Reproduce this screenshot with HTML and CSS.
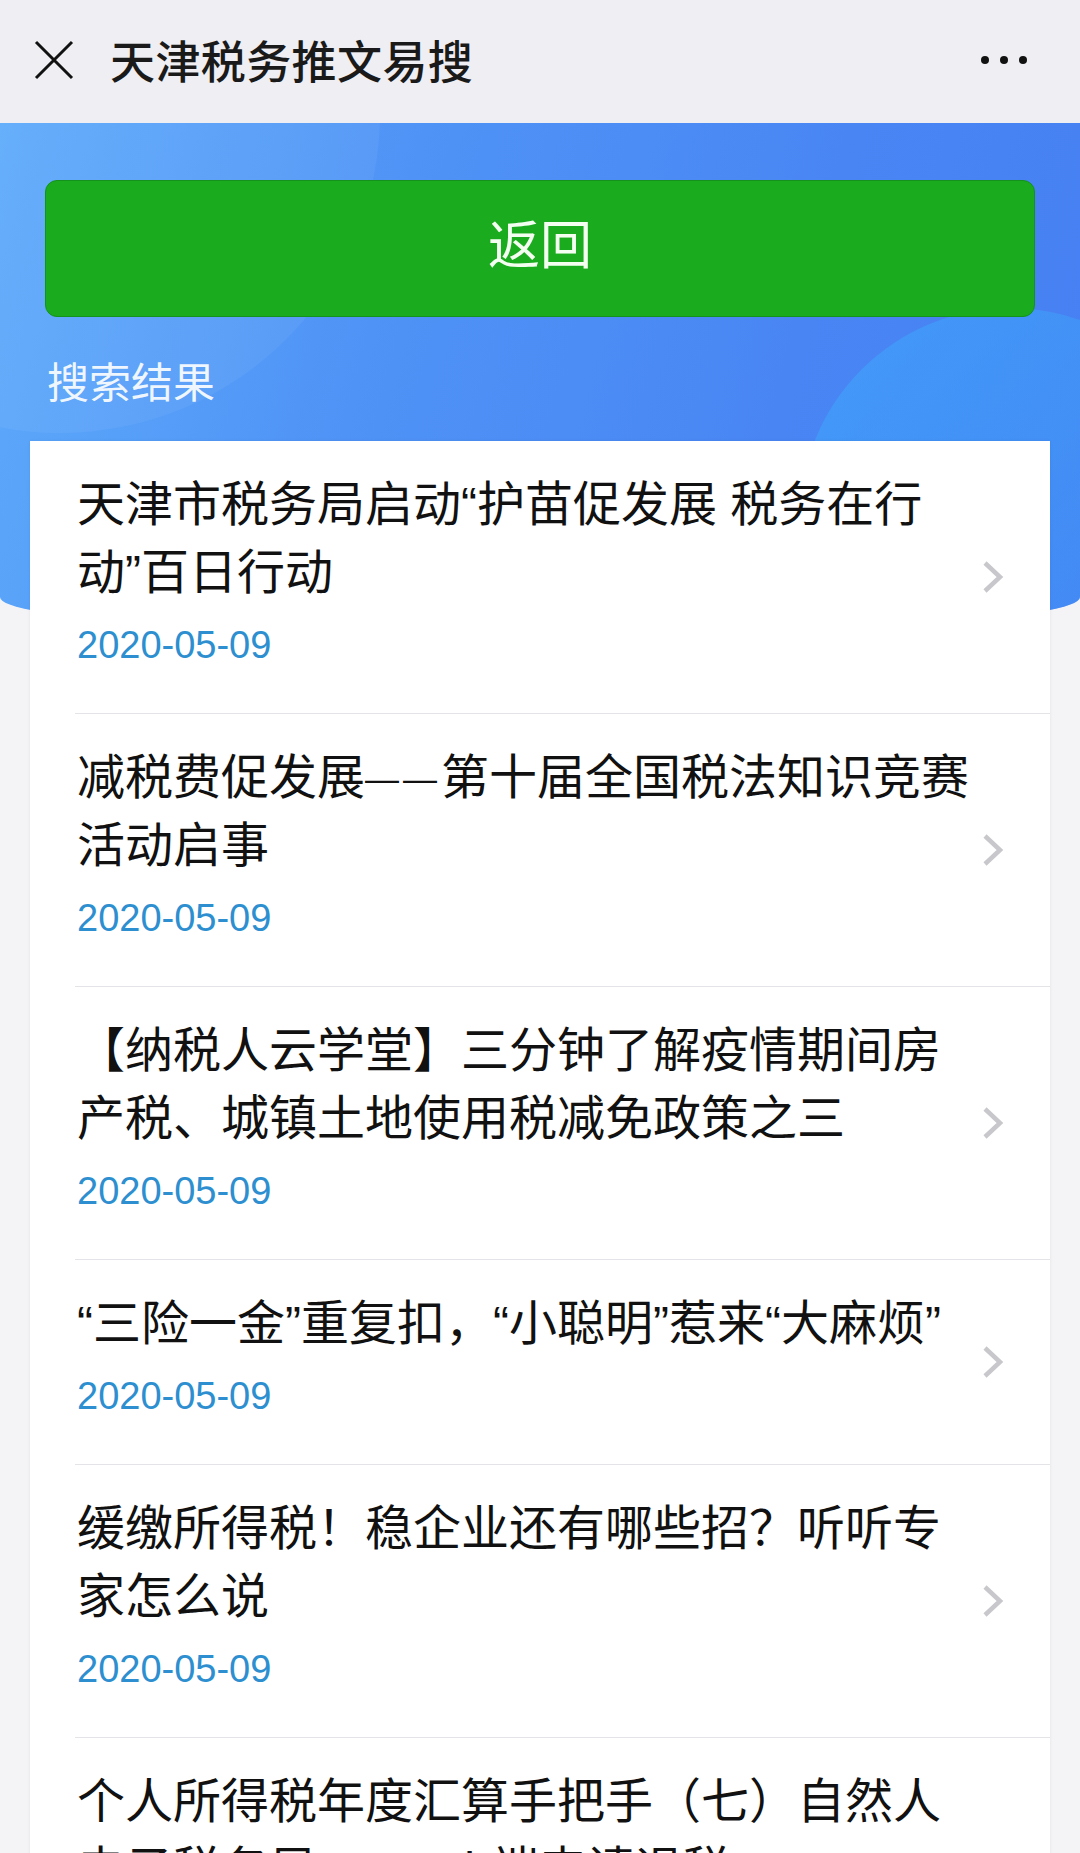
FILE: index.html
```html
<!DOCTYPE html>
<html lang="zh-CN">
<head>
<meta charset="UTF-8" />
<title>天津税务推文易搜</title>
<link rel="stylesheet" href="styles.css">
</head>
<body>
  <!-- Barre du haut -->
  <div class="topbar">
    <svg class="close-icon" viewBox="0 0 40 40" width="40" height="40">
      <path d="M2 2 L38 38 M38 2 L2 38" />
    </svg>
    <div class="topbar-title">天津税务推文易搜</div>
    <div class="more"><span></span><span></span><span></span></div>
  </div>

  <!-- En-tête bleu -->
  <div class="header">
    <button class="back-btn">返回</button>
    <div class="section-label">搜索结果</div>
  </div>

  <!-- Résultats -->
  <div class="results">
    <div class="item">
      <div class="item-body">
        <div class="item-title">天津市税务局启动“护苗促发展 税务在行动”百日行动</div>
        <div class="item-date">2020-05-09</div>
      </div>
      <svg class="chevron" viewBox="0 0 22 34"><polyline points="3,3 18,17 3,31" /></svg>
    </div>
    <div class="item">
      <div class="item-body">
        <div class="item-title">减税费促发展<span class="dash">——</span>第十届全国税法知识竞赛活动启事</div>
        <div class="item-date">2020-05-09</div>
      </div>
      <svg class="chevron" viewBox="0 0 22 34"><polyline points="3,3 18,17 3,31" /></svg>
    </div>
    <div class="item">
      <div class="item-body">
        <div class="item-title">【纳税人云学堂】三分钟了解疫情期间房产税、城镇土地使用税减免政策之三</div>
        <div class="item-date">2020-05-09</div>
      </div>
      <svg class="chevron" viewBox="0 0 22 34"><polyline points="3,3 18,17 3,31" /></svg>
    </div>
    <div class="item">
      <div class="item-body">
        <div class="item-title">“三险一金”重复扣，“小聪明”惹来“大麻烦”</div>
        <div class="item-date">2020-05-09</div>
      </div>
      <svg class="chevron" viewBox="0 0 22 34"><polyline points="3,3 18,17 3,31" /></svg>
    </div>
    <div class="item">
      <div class="item-body">
        <div class="item-title">缓缴所得税！稳企业还有哪些招？听听专家怎么说</div>
        <div class="item-date">2020-05-09</div>
      </div>
      <svg class="chevron" viewBox="0 0 22 34"><polyline points="3,3 18,17 3,31" /></svg>
    </div>
    <div class="item">
      <div class="item-body">
        <div class="item-title">个人所得税年度汇算手把手（七）自然人电子税务局<span class="dash">——</span>Web端申请退税</div>
        <div class="item-date">2020-05-09</div>
      </div>
      <svg class="chevron" viewBox="0 0 22 34"><polyline points="3,3 18,17 3,31" /></svg>
    </div>
  </div>
</body>
</html>
```

FILE: styles.css
```css
/* ========== Global ========== */
html, body {
  margin: 0;
  overflow: hidden;
  font-family: "Liberation Sans", "Noto Sans CJK SC", sans-serif;
}
body {
  background: #f4f4f6;
  color: #111;
}

/* Barre du haut */
.topbar {
  height: 123px;
  display: flex;
  align-items: center;
  padding: 0 53px 0 34px;
  background: #efeef2;
}
.close-icon {
  flex: none;
  width: 40px;
  height: 40px;
  margin-top: -4px;
}
.close-icon path {
  stroke: #111;
  stroke-width: 3;
  fill: none;
}
.topbar-title {
  margin-left: 36px;
  font-size: 45px;
  font-weight: 500;
  color: #1a1a1a;
  letter-spacing: 0.4px;
  margin-top: -4px;
}
.more {
  margin-left: auto;
  display: flex;
  gap: 11px;
  margin-top: -4px;
}
.more span {
  width: 8px;
  height: 8px;
  border-radius: 50%;
  background: #111;
}

/* En-tête bleu */
.header {
  position: relative;
  overflow: hidden;
  box-sizing: border-box;
  height: 514px;
  padding: 57px 45px 0 45px;
  background: linear-gradient(105deg, #5eabfb 0%, #4f93f6 35%, #4986f4 70%, #467ff2 100%);
  border-radius: 0 0 540px 540px / 0 0 40px 40px;
}
.header::before {
  content: "";
  position: absolute;
  left: -260px;
  top: -330px;
  width: 640px;
  height: 640px;
  border-radius: 50%;
  background: rgba(255, 255, 255, 0.05);
}
.header::after {
  content: "";
  position: absolute;
  left: 800px;
  top: 185px;
  width: 420px;
  height: 420px;
  border-radius: 50%;
  background: linear-gradient(135deg, rgba(62, 168, 252, 0.6) 0%, rgba(62, 160, 250, 0.45) 50%, rgba(62, 150, 250, 0.15) 100%);
}
.back-btn {
  position: relative;
  z-index: 1;
  display: block;
  width: 100%;
  height: 137px;
  margin: 0;
  padding: 0 0 14px 0;
  border: 1px solid #15921b;
  border-radius: 12px;
  background: #1aab1e;
  color: #f4fff2;
  font-family: "Noto Sans CJK SC", sans-serif;
  font-size: 52px;
  cursor: pointer;
}
.section-label {
  position: relative;
  z-index: 1;
  margin-top: 42px;
  padding-left: 2px;
  font-family: "Noto Sans CJK SC", sans-serif;
  font-size: 42px;
  line-height: 42px;
  color: rgba(255, 255, 255, 0.92);
}

/* Carte des résultats */
.results {
  position: relative;
  z-index: 2;
  margin: -196px 30px 0 30px;
  background: #fff;
  box-shadow: 0 0 3px rgba(0, 0, 0, 0.08);
}
.item {
  display: flex;
  align-items: center;
  margin-left: 45px;
  padding: 30px 46px 44px 2px;
  border-bottom: 1px solid #e4e4e8;
}
.item-body {
  flex: 1;
}
.item-title {
  width: 893px;
  font-size: 48px;
  line-height: 68px;
  color: #111;
}
.dash {
  font-size: 34px;
  letter-spacing: 4px;
  vertical-align: 4px;
}
.item-date {
  margin-top: 14px;
  font-size: 38px;
  line-height: 48px;
  color: #2d8fd0;
}
.chevron {
  flex: none;
  width: 22px;
  height: 34px;
  margin-top: 14px;
}
.chevron polyline {
  fill: none;
  stroke: #c8c8cc;
  stroke-width: 4.5;
}
```
